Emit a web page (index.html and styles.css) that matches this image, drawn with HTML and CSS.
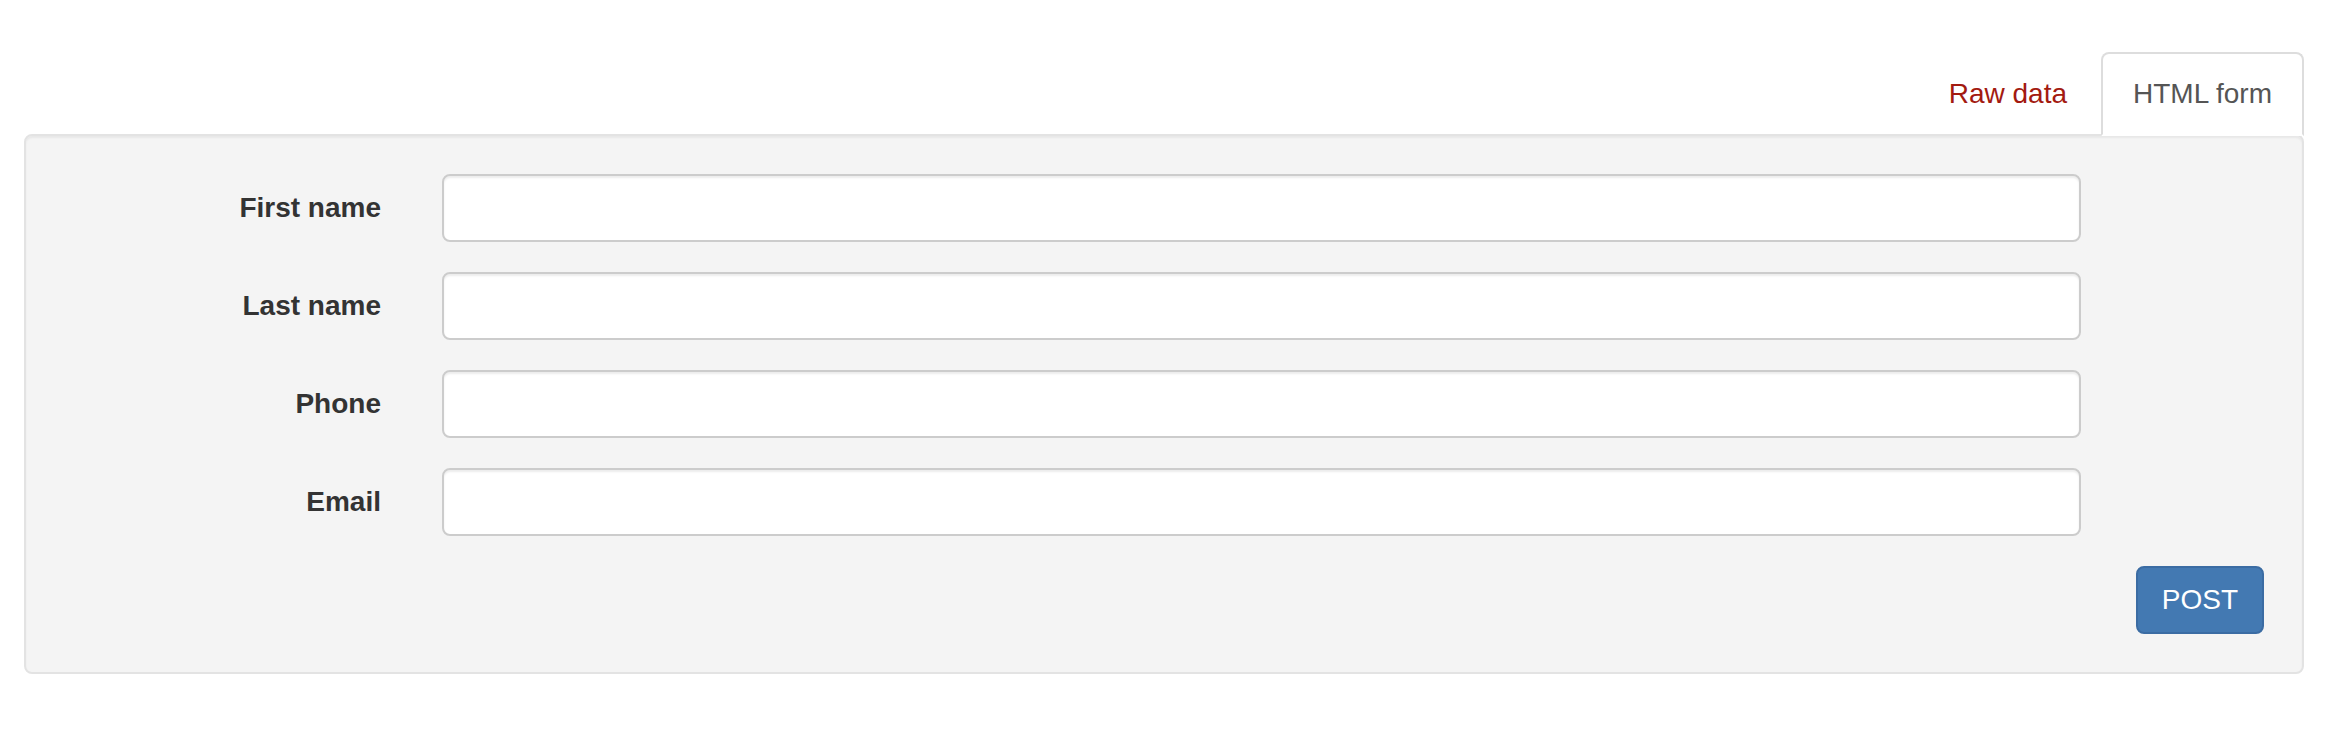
FILE: index.html
```html
<!DOCTYPE html>
<html lang="en">
<head>
<meta charset="utf-8">
<title>HTML form</title>
<link rel="stylesheet" href="styles.css">
</head>
<body>
<div class="page">
  <ul class="tabs">
    <li class="tab"><a class="tab-link" href="#">Raw data</a></li>
    <li class="tab tab-active"><a class="tab-link" href="#">HTML form</a></li>
  </ul>
  <div class="well">
    <form class="form">
      <div class="form-group">
        <label class="control-label">First name</label>
        <input class="form-control" type="text">
      </div>
      <div class="form-group">
        <label class="control-label">Last name</label>
        <input class="form-control" type="text">
      </div>
      <div class="form-group">
        <label class="control-label">Phone</label>
        <input class="form-control" type="text">
      </div>
      <div class="form-group">
        <label class="control-label">Email</label>
        <input class="form-control" type="text">
      </div>
      <div class="form-actions">
        <button class="btn-primary" type="button">POST</button>
      </div>
    </form>
  </div>
</div>
</body>
</html>
```
FILE: styles.css
```css
html, body {
  margin: 0;
  padding: 0;
  background: #ffffff;
}

body {
  font-family: "Liberation Sans", Arial, Helvetica, sans-serif;
  font-size: 28px;
  line-height: 40px;
  color: #333333;
}

.page {
  padding: 52px 38px 0 24px;
}

.tabs {
  list-style: none;
  margin: 0 0 -2px 0;
  padding: 0;
  display: flex;
  justify-content: flex-end;
  position: relative;
  z-index: 1;
}

.tab {
  margin-right: 2px;
}

.tab:last-child {
  margin-right: 0;
}

.tab-link {
  display: block;
  padding: 20px 30px;
  line-height: 40px;
  border: 2px solid transparent;
  border-radius: 8px 8px 0 0;
  text-decoration: none;
  color: #a31a10;
}

.tab-active .tab-link {
  color: #555555;
  background: #ffffff;
  border-color: #dddddd;
  border-bottom-color: #ffffff;
}

.well {
  background: #f4f4f4;
  border: 2px solid #e3e3e3;
  border-radius: 8px;
  padding: 38px;
  box-shadow: inset 0 2px 2px rgba(0, 0, 0, 0.05);
}

.form {
  margin: 0;
}

.form-group {
  display: grid;
  grid-template-columns: 317px 1639px;
  column-gap: 61px;
  margin-bottom: 30px;
}

.control-label {
  display: block;
  text-align: right;
  font-weight: bold;
  padding-top: 14px;
  line-height: 40px;
}

.form-control {
  display: block;
  box-sizing: border-box;
  height: 68px;
  width: 100%;
  margin: 0;
  padding: 12px 24px;
  font-family: inherit;
  font-size: 28px;
  color: #555555;
  background: #ffffff;
  border: 2px solid #cccccc;
  border-radius: 8px;
  box-shadow: inset 0 2px 2px rgba(0, 0, 0, 0.075);
  outline: none;
}

.form-actions {
  display: flex;
  justify-content: flex-end;
}

.btn-primary {
  box-sizing: border-box;
  height: 68px;
  padding: 12px 24px;
  font-family: inherit;
  font-size: 28px;
  line-height: 40px;
  color: #ffffff;
  background: #4379b2;
  border: 2px solid #3b6ca3;
  border-radius: 8px;
  cursor: pointer;
}
```
